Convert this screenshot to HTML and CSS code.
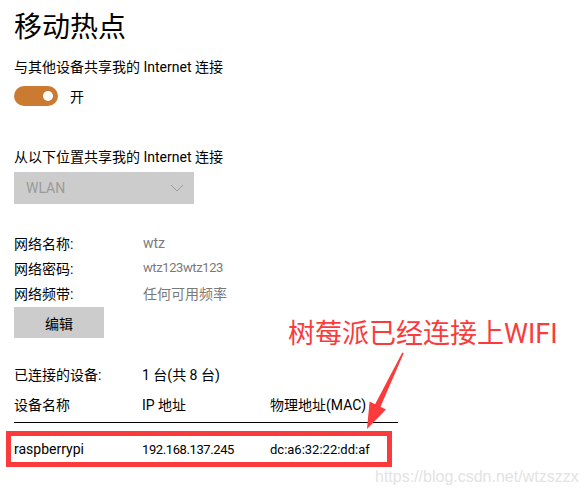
FILE: index.html
```html
<!DOCTYPE html>
<html>
  <head>
    <title>移动热点</title>
    <link rel="stylesheet" href="styles.css">
  </head>

  <body>
    <div class="page">
      <h1 class="title">移动热点</h1>
      <p class="label">与其他设备共享我的 Internet 连接</p>
      <div class="toggle-row">
        <span class="toggle"><span class="knob"></span></span>
        <span>开</span>
      </div>

      <p class="label from">从以下位置共享我的 Internet 连接</p>
      <div class="select">
        <span>WLAN</span>
        <svg width="14" height="8" viewBox="0 0 14 8">
          <polyline points="1,1 7,7 13,1" fill="none" stroke="#9a9a9a" stroke-width="1" />
        </svg>
      </div>

      <div class="info">
        <span>网络名称:</span><span class="val">wtz</span>
        <span>网络密码:</span><span class="val num">wtz123wtz123</span>
        <span>网络频带:</span><span class="val">任何可用频率</span>
      </div>
      <button class="edit">编辑</button>

      <div class="connected">
        <span class="col-a">已连接的设备:</span><span>1 台(共 8 台)</span>
      </div>

      <div class="devices">
        <div class="dev-head">
          <span class="col-a">设备名称</span>
          <span class="col-b">IP 地址</span>
          <span>物理地址(MAC)</span>
        </div>
        <!-- row marked with red box in the screenshot -->
        <div class="dev-row">
          <span class="col-a">raspberrypi</span>
          <span class="col-b num">192.168.137.245</span>
          <span class="mac">dc:a6:32:22:dd:af</span>
        </div>
      </div>
    </div>

    <div class="note">树莓派已经连接上WIFI</div>
    <svg class="arrow" width="585" height="496" viewBox="0 0 585 496">
      <polygon points="402.3,352.5 403.7,353.3 380.5,406.8 386,409.6 367,429 369.6,401.6 375.1,404.2" fill="#fb3b3b" />
    </svg>
    <div class="mark">https://blog.csdn.net/wtzszzx</div>
  </body>
</html>
```

FILE: styles.css
```css
/* page base */
body {
  margin: 0;
  background-color: #fff;
  color: #000;
  font-family: Roboto, "Noto Sans CJK SC", sans-serif;
  font-size: 14px;
  width: 585px;
  height: 496px;
  overflow: hidden;
  position: relative;
}

.page {
  padding-left: 14px;
}

.title {
  margin: 0;
  padding-top: 10px;
  font-size: 28px;
  font-weight: normal;
  line-height: 36px;
}

.label {
  margin: 11px 0 0 0;
  line-height: 20px;
}

.label.from {
  margin-top: 41px;
}

/* switch */
.toggle-row {
  margin-top: 9px;
  height: 20px;
  display: flex;
  align-items: center;
  gap: 12px;
}

.toggle {
  width: 44px;
  height: 20px;
  border-radius: 10px;
  background-color: #cb7a31;
  display: flex;
  align-items: center;
  justify-content: flex-end;
  padding-right: 5px;
  box-sizing: border-box;
}

.knob {
  width: 10px;
  height: 10px;
  border-radius: 50%;
  background-color: #fff;
}

/* dropdown */
.select {
  margin-top: 5px;
  width: 180px;
  height: 32px;
  background-color: #cccccc;
  color: #9a9a9a;
  display: flex;
  align-items: center;
  justify-content: space-between;
  padding: 0 10px 0 12px;
  box-sizing: border-box;
}

.info {
  margin-top: 26px;
  display: grid;
  grid-template-columns: 129px auto;
  grid-auto-rows: 25px;
  align-items: center;
}

.info .val {
  color: #7a7a7a;
}

.num {
  font-size: 13px;
  letter-spacing: -0.4px;
}

.mac {
  font-size: 13px;
}

.edit {
  margin-top: 2px;
  width: 90px;
  height: 31px;
  border: none;
  background-color: #cccccc;
  font-family: inherit;
  font-size: 14px;
  color: #000;
  padding: 0;
}

.connected {
  margin-top: 27px;
  display: flex;
  line-height: 20px;
}

.col-a {
  width: 128px;
}

.col-b {
  width: 128px;
}

.devices {
  margin-top: 10px;
}

.dev-head {
  display: flex;
  line-height: 20px;
  width: 384px;
  padding-bottom: 7px;
  border-bottom: 1px solid #000;
}

.dev-row {
  display: flex;
  align-items: center;
  margin-top: 8px;
  margin-left: -8px;
  width: 386px;
  height: 36px;
  box-sizing: border-box;
  border: 5px solid #fb3b3b;
  padding-left: 3px;
}

/* annotations drawn over the screenshot */
.note {
  position: absolute;
  left: 288px;
  top: 314px;
  font-size: 27px;
  line-height: 40px;
  color: #fb3b3b;
}

.arrow {
  position: absolute;
  left: 0;
  top: 0;
}

.mark {
  position: absolute;
  left: 375px;
  top: 468px;
  font-family: "Liberation Sans", sans-serif;
  font-size: 16px;
  color: #e3e3e3;
}
```
